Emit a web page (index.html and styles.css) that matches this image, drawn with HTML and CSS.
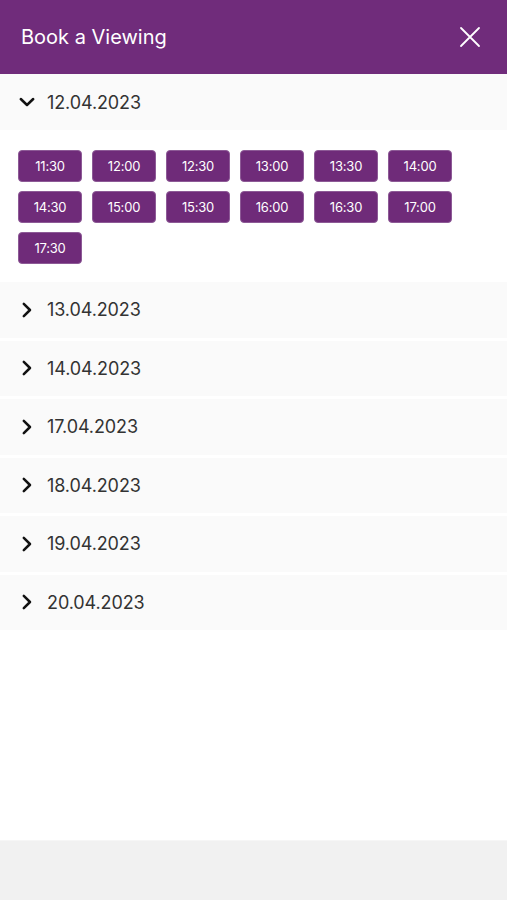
FILE: index.html
```html
<!DOCTYPE html>
<html lang="en">
<head>
<meta charset="utf-8">
<title>Book a Viewing</title>
<link rel="stylesheet" href="styles.css">
</head>
<body>
<div class="page">
  <header class="header">
    <h1 class="title">Book a Viewing</h1>
    <button class="close" aria-label="Close">
      <svg width="22" height="22" viewBox="0 0 22 22"><path d="M2 2L20 20M20 2L2 20" stroke="#fff" stroke-width="1.8" stroke-linecap="round"/></svg>
    </button>
  </header>
  <main class="list">
    <section class="day open">
      <div class="day-head">
        <svg class="chev" width="16" height="16" viewBox="0 0 16 16"><path d="M1.8 5L8 11L14.2 5" fill="none" stroke="#111" stroke-width="2.5" stroke-linecap="round" stroke-linejoin="round"/></svg>
        <span class="date">12.04.2023</span>
      </div>
      <div class="slots">
        <button class="slot">11:30</button>
        <button class="slot">12:00</button>
        <button class="slot">12:30</button>
        <button class="slot">13:00</button>
        <button class="slot">13:30</button>
        <button class="slot">14:00</button>
        <button class="slot">14:30</button>
        <button class="slot">15:00</button>
        <button class="slot">15:30</button>
        <button class="slot">16:00</button>
        <button class="slot">16:30</button>
        <button class="slot">17:00</button>
        <button class="slot">17:30</button>
      </div>
    </section>
    <section class="day"><div class="day-head"><svg class="chev" width="16" height="16" viewBox="0 0 16 16"><path d="M4.8 1.8L11 8L4.8 14.2" fill="none" stroke="#111" stroke-width="2.5" stroke-linecap="round" stroke-linejoin="round"/></svg><span class="date">13.04.2023</span></div></section>
    <section class="day"><div class="day-head"><svg class="chev" width="16" height="16" viewBox="0 0 16 16"><path d="M4.8 1.8L11 8L4.8 14.2" fill="none" stroke="#111" stroke-width="2.5" stroke-linecap="round" stroke-linejoin="round"/></svg><span class="date">14.04.2023</span></div></section>
    <section class="day"><div class="day-head"><svg class="chev" width="16" height="16" viewBox="0 0 16 16"><path d="M4.8 1.8L11 8L4.8 14.2" fill="none" stroke="#111" stroke-width="2.5" stroke-linecap="round" stroke-linejoin="round"/></svg><span class="date">17.04.2023</span></div></section>
    <section class="day"><div class="day-head"><svg class="chev" width="16" height="16" viewBox="0 0 16 16"><path d="M4.8 1.8L11 8L4.8 14.2" fill="none" stroke="#111" stroke-width="2.5" stroke-linecap="round" stroke-linejoin="round"/></svg><span class="date">18.04.2023</span></div></section>
    <section class="day"><div class="day-head"><svg class="chev" width="16" height="16" viewBox="0 0 16 16"><path d="M4.8 1.8L11 8L4.8 14.2" fill="none" stroke="#111" stroke-width="2.5" stroke-linecap="round" stroke-linejoin="round"/></svg><span class="date">19.04.2023</span></div></section>
    <section class="day"><div class="day-head"><svg class="chev" width="16" height="16" viewBox="0 0 16 16"><path d="M4.8 1.8L11 8L4.8 14.2" fill="none" stroke="#111" stroke-width="2.5" stroke-linecap="round" stroke-linejoin="round"/></svg><span class="date">20.04.2023</span></div></section>
  </main>
  <footer class="footer"></footer>
</div>
</body>
</html>
```
FILE: styles.css
```css
* { box-sizing: border-box; }
html, body { margin: 0; padding: 0; }
body {
  font-family: "Inter", "Noto Sans", "Liberation Sans", sans-serif;
  background: #fff;
  color: #333;
}
.page {
  height: 900px;
  display: flex;
  flex-direction: column;
}
.header {
  height: 74px;
  background: #702c7b;
  display: flex;
  align-items: center;
  justify-content: space-between;
  padding: 0 26px 0 21px;
  flex: none;
}
.title {
  margin: 0;
  font-size: 20px;
  font-weight: 400;
  color: #fff;
}
.close {
  background: none;
  border: 0;
  padding: 0;
  width: 22px;
  height: 22px;
  display: flex;
  cursor: pointer;
}
.list {
  flex: 1;
  display: flex;
  flex-direction: column;
  gap: 3px;
}
.day-head {
  height: 55.5px;
  background: #fafafa;
  display: flex;
  align-items: center;
  padding-left: 19px;
  gap: 12px;
}
.day.open .day-head { height: 56px; }
.chev { flex: none; }
.date {
  font-size: 18px;
  color: #333;
  letter-spacing: -0.1px;
}
.slots {
  display: flex;
  flex-wrap: wrap;
  gap: 9px 10px;
  padding: 20px 40px 15px 18px;
  background: #fff;
}
.slot {
  min-width: 64px;
  height: 32px;
  padding: 0 14px;
  background: #6f2b79;
  color: #fff;
  border: 1px solid #8d5a96;
  border-radius: 4px;
  font-family: inherit;
  font-size: 13px;
  letter-spacing: -0.2px;
}
.footer {
  height: 60px;
  background: #f1f1f1;
  flex: none;
  border-top: 1px solid #f6f6f6;
}
```
